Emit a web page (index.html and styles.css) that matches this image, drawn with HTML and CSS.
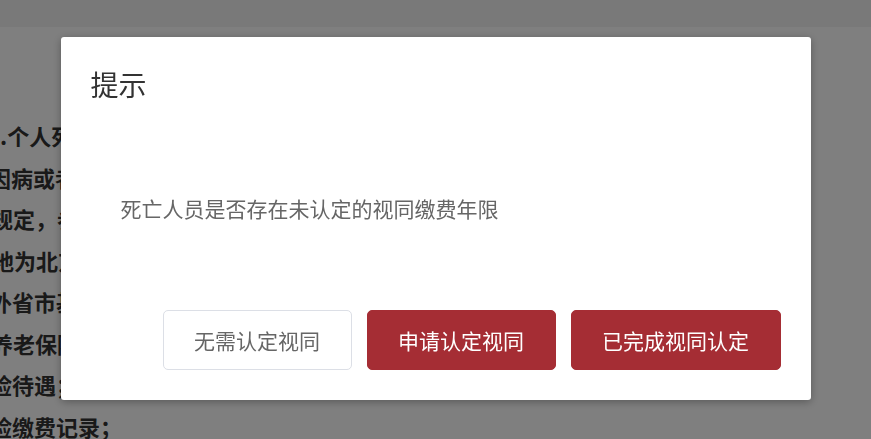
FILE: index.html
```html
<!DOCTYPE html>
<html lang="zh-CN">
<head>
  <meta charset="UTF-8">
  <meta name="viewport" content="width=device-width, initial-scale=1.0">
  <title>提示</title>
  <link rel="stylesheet" href="styles.css">
</head>
<body>
  <div class="page">
    <div class="topbar"></div>

    <!-- Article behind the dialog -->
    <div class="article">
      <p class="l1">1.个人死亡后，其家属可以申请领取丧葬补助金和抚恤金</p>
      <p class="l2">因病或者非因工死亡的，按照国家和本市有关</p>
      <p class="l3">规定，参保人员死亡时基本养老保险关系所在</p>
      <p class="l4">地为北京市的，由本市社会保险经办机构支付</p>
      <p class="l5">外省市基本养老保险关系转入本市的人员</p>
      <p class="l6">养老保险缴费年限计算</p>
      <p class="l7">险待遇；</p>
      <p class="l8">险缴费记录；</p>
    </div>
  </div>

  <!-- Modal -->
  <div class="overlay">
    <div class="dialog">
      <div class="dialog-title">提示</div>
      <div class="dialog-body">
        <span>死亡人员是否存在未认定的视同缴费年限</span>
      </div>
      <div class="dialog-footer">
        <button class="btn btn-plain">无需认定视同</button>
        <button class="btn btn-primary">申请认定视同</button>
        <button class="btn btn-primary btn-wide">已完成视同认定</button>
      </div>
    </div>
  </div>
</body>
</html>
```

FILE: styles.css
```css
html, body {
  margin: 0;
  padding: 0;
  height: 100%;
  overflow: hidden;
}
body {
  font-family: "Noto Sans CJK SC", "Noto Sans", sans-serif;
  background-color: #ffffff;
  color: #333;
}
.topbar {
  height: 27px;
  background-color: #f3f3f3;
}
.article {
  margin-left: -13px;
  padding-top: 88px;
}
.article p {
  margin: 0;
  white-space: nowrap;
  font-size: 22px;
  font-weight: bold;
  line-height: 41.5px;
  color: #333;
}
.article .l2 { margin-left: 2px; }
.article .l3 { margin-left: 4px; }
.article .l4 { margin-left: 5px; }
.article .l5 { margin-left: 3px; }
.article .l6 { margin-left: 4px; }
.article .l7 { margin-left: 3px; }
.article .l8 { margin-left: 3px; }

.overlay {
  position: fixed;
  top: 0;
  left: 0;
  right: 0;
  bottom: 0;
  background-color: rgba(0, 0, 0, 0.5);
  display: flex;
  align-items: center;
  justify-content: center;
}
.dialog {
  width: 750px;
  height: 363px;
  box-sizing: border-box;
  margin-top: -2px;
  padding: 25px 30px 30px 30px;
  background: #ffffff;
  border-radius: 3px;
  box-shadow: 0 2px 8px rgba(0, 0, 0, 0.3);
  display: flex;
  flex-direction: column;
}
.dialog-title {
  font-size: 28px;
  line-height: 44px;
  color: #333;
}
.dialog-body {
  flex: 1;
  display: flex;
  align-items: center;
  padding-left: 30px;
  font-size: 21px;
  color: #666;
}
.dialog-footer {
  display: flex;
  justify-content: flex-end;
  gap: 15px;
}
.btn {
  width: 189px;
  height: 60px;
  padding: 0;
  border-radius: 5px;
  font-family: inherit;
  font-size: 21px;
  cursor: pointer;
}
.btn-wide {
  width: 210px;
}
.btn-plain {
  background: #ffffff;
  border: 1px solid #dcdfe6;
  color: #666;
}
.btn-primary {
  background-color: #a52d34;
  border: 1px solid #a52d34;
  color: #ffffff;
}
```
